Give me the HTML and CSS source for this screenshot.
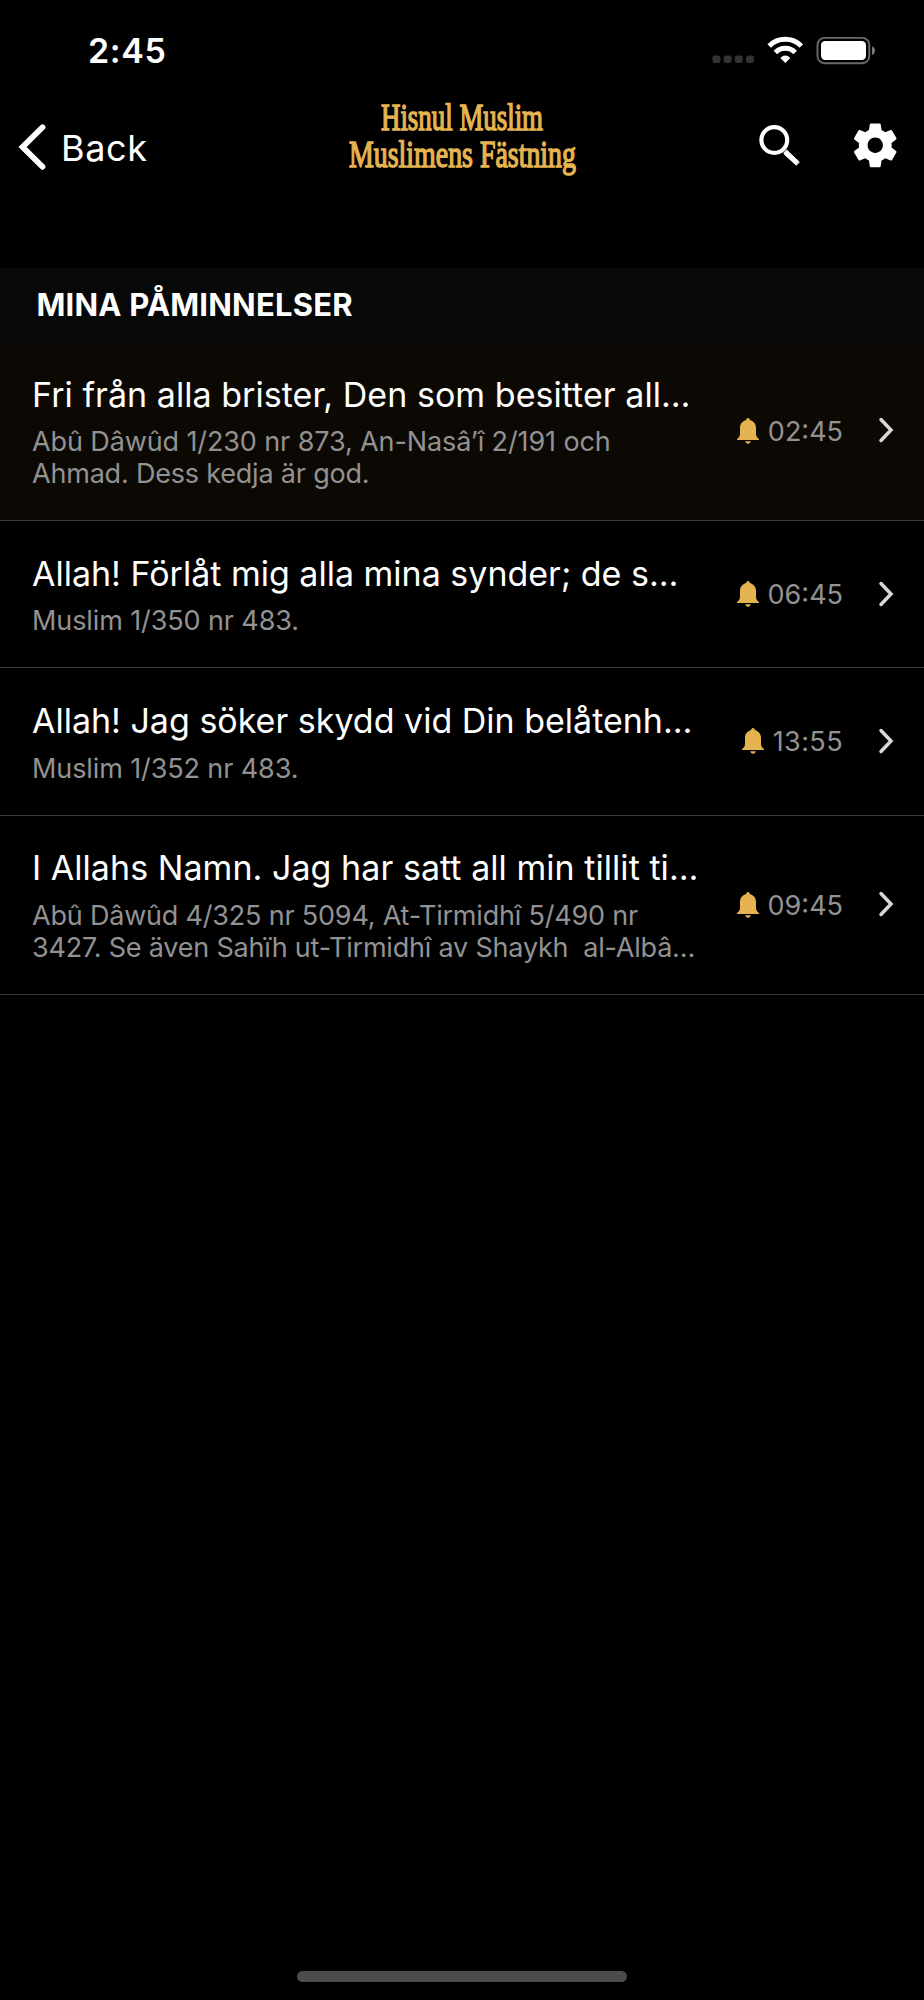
FILE: index.html
```html
<!DOCTYPE html>
<html lang="sv">
<head>
<meta charset="utf-8">
<title>Mina påminnelser</title>
<link rel="stylesheet" href="styles.css">
</head>
<body>
<div class="screen">
  <header class="status">
    <span class="clock">2:45</span>
    <svg class="status-icons" width="168" height="30" viewBox="0 0 168 30">
      <g fill="#333"><rect x=".5" y="19.500" width="8" height="7.500" rx="2.300"/><rect x="11.700" y="19.500" width="8" height="7.500" rx="2.300"/><rect x="22.800" y="19.500" width="8" height="7.500" rx="2.300"/><rect x="34" y="19.500" width="8" height="7.500" rx="2.300"/></g>
      <g fill="none" stroke="#fff" stroke-width="5"><path d="M57.200 10.100A22.500 22.500 0 0 1 89.300 10.100"/><path d="M63.400 16.500A13.900 13.900 0 0 1 83.200 16.500"/></g>
      <path fill="#fff" d="M73.300 27L68.300 21.900Q73.300 17.300 78.300 21.900Z"/>
      <rect x="105.500" y="1.900" width="51.800" height="25.300" rx="7" fill="none" stroke="#6a6a6a" stroke-width="1.900"/>
      <rect x="109" y="5" width="45" height="19" rx="4.200" fill="#fff"/>
      <path fill="#7a7a7a" d="M160 10.200Q163 11.400 163 14.600Q163 17.800 160 19Z"/>
    </svg>
  </header>
  <nav class="nav">
    <a class="back"><svg width="28" height="48" viewBox="0 0 28 48"><path d="M26.500 4.300L6.600 24L26.500 43.800" fill="none" stroke="#fff" stroke-width="5.800" stroke-linecap="round"/></svg><span>Back</span></a>
    <svg class="brand" width="240" height="80" viewBox="0 0 240 80">
      <text x="37" y="32" textLength="162" lengthAdjust="spacingAndGlyphs">Hisnul Muslim</text>
      <text x="5" y="69" textLength="227" lengthAdjust="spacingAndGlyphs">Muslimens Fästning</text>
    </svg>
    <div class="actions">
      <svg width="44" height="44" viewBox="0 0 44 44"><circle cx="18.300" cy="18" r="12.900" fill="none" stroke="#fff" stroke-width="4.200"/><path d="M28 30.800L30.500 27.900L43.300 40L40.300 43.200L28.500 32.500Z" fill="#fff" stroke="#fff" stroke-width="1"/></svg>
      <svg width="52.500" height="52.500" viewBox="0 0 24 24"><path fill="#fff" d="M19.430 12.980c.04-.32.07-.64.07-.98s-.03-.66-.07-.98l2.110-1.650c.19-.15.24-.42.12-.64l-2-3.460c-.12-.22-.39-.3-.61-.22l-2.490 1c-.52-.4-1.080-.73-1.690-.98l-.38-2.650C14.460 2.180 14.250 2 14 2h-4c-.25 0-.46.18-.49.42l-.38 2.650c-.61.25-1.170.59-1.690.98l-2.490-1c-.23-.09-.49 0-.61.22l-2 3.460c-.13.22-.07.49.12.64l2.110 1.650c-.04.32-.07.65-.07.980s.03.660.07.980l-2.110 1.650c-.19.150-.240.420-.120.640l2 3.460c.120.220.390.300.610.220l2.490-1c.520.400 1.080.730 1.690.980l.380 2.650c.030.240.240.420.490.420h4c.250 0 .460-.180.490-.420l.380-2.650c.610-.250 1.170-.590 1.690-.980l2.490 1c.230.090.490 0 .610-.220l2-3.460c.120-.220.070-.490-.120-.640l-2.110-1.650zM12 15.500c-1.930 0-3.500-1.570-3.500-3.500s1.570-3.500 3.500-3.500 3.500 1.570 3.500 3.500-1.570 3.500-3.500 3.500z"/></svg>
    </div>
  </nav>
  <h1 class="section">MINA PÅMINNELSER</h1>
  <main class="list">
    <article class="row active">
      <div class="body"><h2 class="loose">Fri från alla brister, Den som besitter all…</h2><p>Abû Dâwûd 1/230 nr 873, An-Nasâ’î 2/191 och<br><span class="tight">Ahmad. Dess kedja är god.</span></p></div>
      <div class="meta"><svg class="bell" viewBox="0 0 22 26"><use href="#bell"/></svg><span>02:45</span></div>
      <svg class="chev" viewBox="0 0 16 26"><use href="#chev"/></svg>
    </article>
    <article class="row">
      <div class="body"><h2>Allah! Förlåt mig alla mina synder; de s…</h2><p>Muslim 1/350 nr 483.</p></div>
      <div class="meta"><svg class="bell" viewBox="0 0 22 26"><use href="#bell"/></svg><span>06:45</span></div>
      <svg class="chev" viewBox="0 0 16 26"><use href="#chev"/></svg>
    </article>
    <article class="row">
      <div class="body"><h2>Allah! Jag söker skydd vid Din belåtenh…</h2><p>Muslim 1/352 nr 483.</p></div>
      <div class="meta wide"><svg class="bell" viewBox="0 0 22 26"><use href="#bell"/></svg><span>13:55</span></div>
      <svg class="chev" viewBox="0 0 16 26"><use href="#chev"/></svg>
    </article>
    <article class="row">
      <div class="body"><h2 class="loose">I Allahs Namn. Jag har satt all min tillit ti…</h2><p class="tight">Abû Dâwûd 4/325 nr 5094, At-Tirmidhî 5/490 nr<br>3427. Se även Sahïh ut-Tirmidhî av Shaykh&nbsp; al-Albâ…</p></div>
      <div class="meta"><svg class="bell" viewBox="0 0 22 26"><use href="#bell"/></svg><span>09:45</span></div>
      <svg class="chev" viewBox="0 0 16 26"><use href="#chev"/></svg>
    </article>
  </main>
  <div class="home"></div>
</div>
<svg width="0" height="0" class="defs"><defs>
  <g id="bell"><path d="M11 0C12.100 0 12.800.8 12.800 1.900C16.800 2.900 19 6 19 10V15.500C19 18 20 19.800 22 21V22H0V21C2 19.800 3 18 3 15.500V10C3 6 5.200 2.900 9.200 1.900C9.200.8 9.900 0 11 0Z"/><path d="M8.300 23.300H13.700C13.500 24.900 12.500 25.800 11 25.800S8.500 24.900 8.300 23.300Z"/></g>
  <path id="chev" d="M3 2.500L13 13L3 23.500"/>
</defs></svg>
</body>
</html>
```
FILE: styles.css
```css
* { box-sizing: border-box; }
body { margin: 0; background: #000; color: #fff; font-family: Inter, "Liberation Sans", sans-serif; }
h1, h2, p { margin: 0; font-weight: 400; }
svg { display: block; flex: none; }
.screen { width: 924px; height: 2000px; display: flex; flex-direction: column; overflow: hidden; }
.status { height: 98px; padding: 31px 44px 0 88px; display: flex; justify-content: space-between; align-items: flex-start; }
.clock { font-size: 34px; line-height: 40px; font-weight: 600; letter-spacing: .6px; }
.status-icons { margin-top: 5px; }
.nav { height: 170px; padding: 0 23px 0 16px; display: grid; grid-template-columns: 328px 240px 1fr; align-items: start; }
.back { display: flex; gap: 17px; padding-top: 25px; font-size: 36px; line-height: 50px; letter-spacing: .6px; }
.back svg { overflow: visible; }
.brand { overflow: visible; font-family: "Liberation Serif", serif; font-size: 38.500px; fill: #e5b450; stroke: #e5b450; stroke-width: 1.500px; }
.actions { display: flex; justify-content: flex-end; gap: 49px; padding-top: 21px; }
.actions svg:first-child { margin-top: 3px; }
.section { height: 74px; padding: 18px 36.500px 0; background: #080808; font-size: 31px; line-height: 38px; font-weight: 700; letter-spacing: .2px; }
.row { height: 147.300px; padding: 32.800px 30px 0 32px; display: grid; grid-template-columns: 680px 131px 16px; border-bottom: 1px solid #3d3d3d; }
.row:has(br) { height: 179.300px; }
.row.active { background: #0c0904; height: 179px; }
.row h2 { font-size: 34px; line-height: 40px; margin-bottom: 11.500px; white-space: nowrap; }
.row h2.loose { letter-spacing: .05px; }
.row p { font-size: 27px; line-height: 32px; letter-spacing: -.11px; color: #929292; white-space: nowrap; }
.row .tight { letter-spacing: -.2px; }
.meta { align-self: center; margin-top: -33px; height: 34px; display: flex; justify-content: flex-end; align-items: center; gap: 9px; font-size: 27px; line-height: 34px; color: #929292; }
.meta.wide { letter-spacing: .4px; }
.meta span { padding-top: 2px; }
.bell { width: 22px; height: 26px; fill: #e5b450; }
.chev { align-self: center; margin: -34px 0 0 35px; width: 16px; height: 26px; fill: none; stroke: #d8d8d8; stroke-width: 3.500; stroke-linecap: round; }
.home { width: 330px; height: 11px; margin: auto auto 18px; border-radius: 6px; background: #4c4c4c; }
.defs { position: absolute; }
```
